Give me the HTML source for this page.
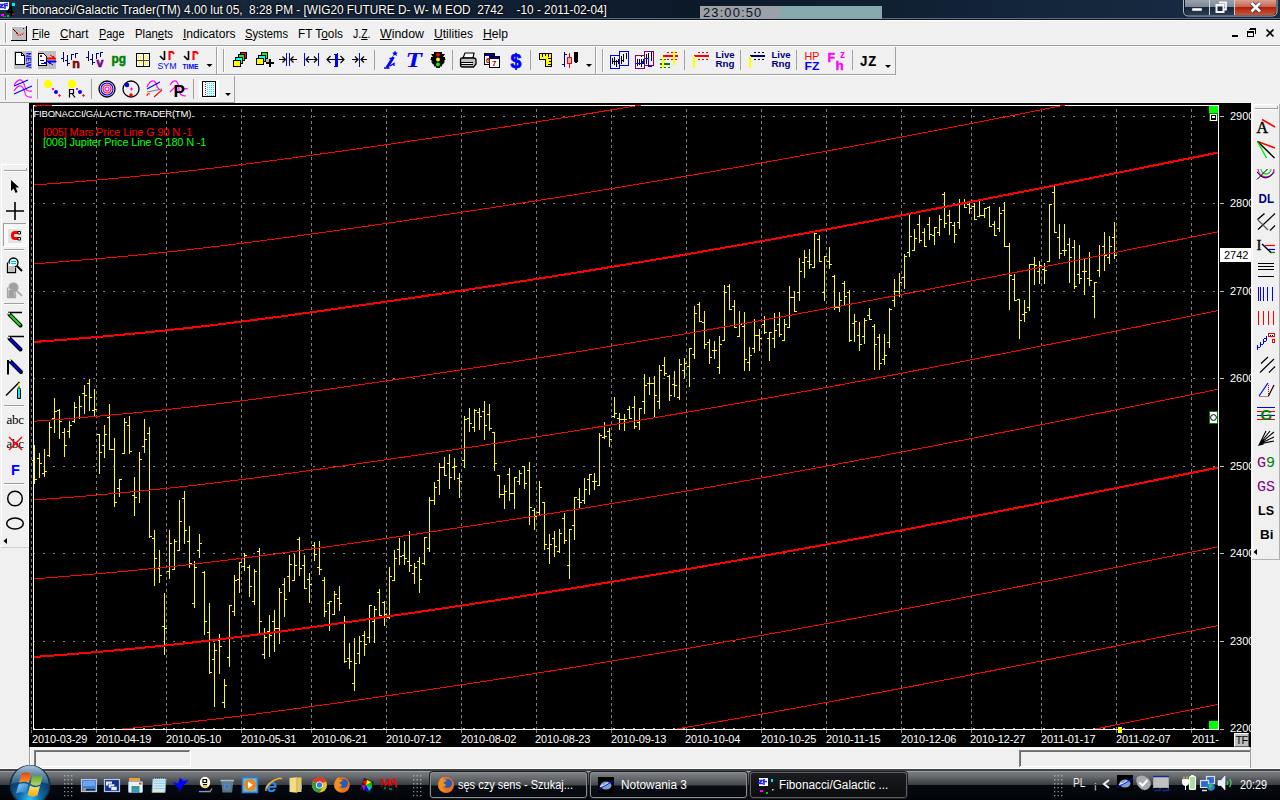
<!DOCTYPE html>
<html><head><meta charset="utf-8"><title>Fibonacci/Galactic Trader</title>
<style>
*{box-sizing:border-box;margin:0;padding:0}
html,body{width:1280px;height:800px;overflow:hidden;background:#f0f0f0;font-family:"Liberation Sans",sans-serif;font-size:12px;color:#000}
.a{position:absolute}
#title{left:0;top:0;width:1280px;height:20px;background:linear-gradient(90deg,#1c2c41 0,#142338 30%,#0c1929 55%,#13253a 80%,#1a2c44 100%)}
#title .l1{left:0;top:18px;width:1280px;height:1px;background:#5d6b7c}
#title .l2{left:0;top:19px;width:1280px;height:1px;background:#0e1826}
#ttext{left:22px;top:2.5px;color:#fff;font-size:12px;white-space:pre;text-shadow:0 0 3px #000,0 0 2px #000;transform-origin:0 0;transform:scaleX(.984)}
#clock{left:700px;top:6px;width:182px;height:13px;background:linear-gradient(90deg,#9ba0a9 0,#9ba0a9 80px,#86a9ae 80px,#86a9ae 100%)}
#clock span{left:3px;top:-1px;font-size:13px;letter-spacing:1.1px;color:#101018}
#menubar{left:0;top:20px;width:1280px;height:26px;background:#f0f0f0;border-top:1px solid #fff}
.mi{position:absolute;top:27px;font-size:12px;white-space:pre;transform-origin:0 0;display:inline-block}
.mi u{text-decoration:underline}
.sepw{left:0;width:1280px;height:1px;background:#fff}
.sepg{left:0;width:1280px;height:1px;background:#a0a0a0}
.grip{width:2px;background:#a0a0a0;border-right:1px solid #fff}
#chartwrap{left:29px;top:103px;width:1222px;height:644px;background:#000}
.ct{position:absolute;font-size:11px;color:#fff;white-space:pre;line-height:11px}
#status{left:0;top:747px;width:1280px;height:22px;background:#f0f0f0}
#taskbar{left:0;top:769px;width:1280px;height:31px;background:linear-gradient(180deg,#404245 0,#404245 2px,#9a9ea3 2px,#9a9ea3 3px,#777b7e 3px,#6a6d71 7px,#4b4e53 12px,#393c41 16px,#04080f 16px,#05080f 24px,#020308 31px)}
.tb{position:absolute;top:772px;height:26px;border:1px solid #8a8d91;border-radius:3px;background:linear-gradient(180deg,#7d8185 0,#63676b 6px,#45484d 12px,#0a0d13 13px,#06090f 100%);color:#fff;font-size:12px;white-space:pre;box-shadow:0 0 0 1px #1a1c20}
.tb.act{background:linear-gradient(180deg,#1a1c1f 0,#0b0c0e 100%);border-color:#5c5f63}
.tb span{position:absolute;top:5px;transform-origin:0 0;display:inline-block}
</style></head><body>
<div id="title" class="a"><div class="a l1"></div><div class="a l2"></div>
<div id="ttext" class="a">Fibonacci/Galactic Trader(TM) 4.00 lut 05,  8:28 PM - [WIG20 FUTURE D- W- M EOD  2742    -10 - 2011-02-04]</div>
<svg id="ticon" class="a" style="left:0;top:0" width="18" height="18" viewBox="0 0 18 18"><rect x="0" y="2" width="9" height="8" fill="#fff"/><path d="M0 4.5h3l-3 3h4M5 3v6M4 5.5h4M8 3.5h-2" stroke="#22f" stroke-width="1.6" fill="none"/><path d="M11.5 6l-4 6h6M11.5 6v10" stroke="#000" stroke-width="1.8" fill="none"/><rect x="12" y="3" width="3" height="3" fill="#0ee"/><rect x="1" y="14" width="3" height="2" fill="#f0f"/><rect x="7" y="15" width="2" height="2" fill="#0c0"/><rect x="12" y="14" width="2" height="1" fill="#f00"/><rect x="3" y="16" width="3" height="1" fill="#088"/></svg>
<svg class="a" style="left:1180px;top:0" width="100" height="18" viewBox="1180 0 100 18">
<defs><linearGradient id="cb1" x1="0" y1="0" x2="0" y2="1"><stop offset="0" stop-color="#98a3ae"/><stop offset=".46" stop-color="#7c8896"/><stop offset=".47" stop-color="#14233a"/><stop offset="1" stop-color="#2a3c54"/></linearGradient>
<linearGradient id="cb2" x1="0" y1="0" x2="0" y2="1"><stop offset="0" stop-color="#dba091"/><stop offset=".46" stop-color="#c8644f"/><stop offset=".47" stop-color="#a8200a"/><stop offset="1" stop-color="#cc5434"/></linearGradient></defs>
<path d="M1183.5 -1V11q0 5 5 5H1272q5 0 5-5V-1z" fill="#0c1828" stroke="#b4bcc6" stroke-width="1"/>
<path d="M1185 0h24v15h-20q-4 0-4-4z" fill="url(#cb1)"/><path d="M1210 0h24v15h-24z" fill="url(#cb1)"/><path d="M1235 0h41v11q0 4-4 4h-37z" fill="url(#cb2)"/>
<path d="M1209.5 0V15M1234.5 0V15" stroke="#c8d0d8" stroke-width="1"/>
<rect x="1192" y="8" width="10" height="3" fill="#fff" stroke="#445" stroke-width=".5"/>
<path d="M1219 2.5h7v7h-2" fill="none" stroke="#f4f4f4" stroke-width="1.8"/><rect x="1216.5" y="5" width="7" height="7" fill="none" stroke="#f4f4f4" stroke-width="2"/>
<path d="M1251.5 3l8.5 8.5M1260 3l-8.5 8.5" stroke="#334" stroke-width="4.2"/><path d="M1251.5 3l8.5 8.5M1260 3l-8.5 8.5" stroke="#fff" stroke-width="2.8"/>
</svg>
<div id="clock" class="a"><span class="a">23:00:50</span></div>
</div>
<div id="menubar" class="a"></div>
<div class="a sepg" style="top:45px"></div><div class="a sepw" style="top:46px"></div>
<div class="a sepg" style="top:74px;width:512px"></div><div class="a sepw" style="top:75px;width:512px"></div>
<span class="mi" style="left:32px;transform:scaleX(0.928)"><u>F</u>ile</span>
<span class="mi" style="left:60px;transform:scaleX(0.970)"><u>C</u>hart</span>
<span class="mi" style="left:99px;transform:scaleX(0.910)"><u>P</u>age</span>
<span class="mi" style="left:135px;transform:scaleX(0.949)">Plan<u>e</u>ts</span>
<span class="mi" style="left:182.5px;transform:scaleX(1.009)"><u>I</u>ndicators</span>
<span class="mi" style="left:245px;transform:scaleX(0.935)"><u>S</u>ystems</span>
<span class="mi" style="left:298px;transform:scaleX(0.987)">FT T<u>o</u>ols</span>
<span class="mi" style="left:352.5px;transform:scaleX(0.872)">J.<u>Z</u>.</span>
<span class="mi" style="left:380px;transform:scaleX(1.030)"><u>W</u>indow</span>
<span class="mi" style="left:434px;transform:scaleX(1.008)"><u>U</u>tilities</span>
<span class="mi" style="left:483px;transform:scaleX(1.013)"><u>H</u>elp</span>
<svg class="a" style="left:0;top:46px" width="900" height="57" viewBox="0 46 900 57" font-family="Liberation Sans" shape-rendering="crispEdges">
<!-- band borders -->
<path d="M0 74.5H895M895.5 47V75M216.5 47V74M595.5 47V74M0 102.5H234M234.5 76V103" stroke="#a0a0a0" fill="none"/>
<path d="M217.5 47V74M596.5 47V74M0 75.5H895" stroke="#fff" fill="none"/>
<!-- grippers -->
<path d="M5.5 49V72M223.5 49V72M602.5 49V72M5.5 78V100M5.5 23V43" stroke="#a0a0a0" fill="none"/>
<path d="M6.5 49V72M224.5 49V72M603.5 49V72M6.5 78V100M6.5 23V43" stroke="#fff" fill="none"/>
<!-- separators -->
<path d="M374.5 50V70M452.5 50V70M530.5 50V70M684.5 50V70M740.5 50V70M796.5 50V70M852.5 50V70M37.5 79V99M91.5 79V99M193.5 79V99" stroke="#a0a0a0" fill="none"/>
<!-- icon1 new -->
<rect x="14" y="51" width="18" height="18" fill="#c0c0c0"/>
<path d="M15.5 52.5H21.5L24.5 55.5V64.5H15.5Z" fill="#fff" stroke="#000"/>
<path d="M21.5 52.5V55.5H24.5" fill="none" stroke="#000"/>
<text transform="translate(26.2,52.5) rotate(90)" font-size="7.5" font-weight="bold" fill="#00f" textLength="15.5" lengthAdjust="spacingAndGlyphs" shape-rendering="auto">NEW</text>
<!-- icon2 -->
<rect x="38" y="51" width="18" height="18" fill="#c0c0c0"/>
<path d="M38.5 53.5H43.5L46.5 56.5V65.5H38.5Z" fill="#fff" stroke="#000"/>
<path d="M40 56h2v1h-2zM40 60h4v1h-4zM41 63h3v1h-3z" fill="#00f"/><path d="M40 55h2v1h-2zM44 62h2v2h-2z" fill="#f00"/><rect x="44" y="62" width="2" height="2" fill="#00f"/>
<path d="M47 58h6v-2l3 3h-9zM50 55l3 2" fill="#f00" stroke="#f00" stroke-width="1" shape-rendering="auto"/>
<path d="M56 62h-6v2l-3-3h9zM53 65l-3-2" fill="#00f" stroke="#00f" stroke-width="1" shape-rendering="auto"/>
<!-- icon3 bars n -->
<g stroke="#000080" fill="none"><path d="M63.5 52V62M61 58.5h2M67.5 55V66M65 60.5h2M68 63.5h2M71.5 54V60M72 54.5h2M75.5 53V58M76 53.5h2"/></g>
<text x="72.3" y="68" font-size="12.5" font-weight="bold" fill="#800000" stroke="#800000" stroke-width=".6" shape-rendering="auto">n</text>
<g stroke="#000080" fill="none"><path d="M88.5 51V61M86 57.5h2M92.5 54V65M90 59.5h2M93 62.5h2M96.5 53V59M97 53.5h2M100.5 52V57M101 52.5h2"/></g>
<text x="96.5" y="67" font-size="12.5" font-weight="bold" fill="#800080" stroke="#800080" stroke-width=".6" shape-rendering="auto">v</text>
<text x="111.5" y="62.5" font-size="13" font-weight="bold" fill="#008000" stroke="#008000" stroke-width=".5" shape-rendering="auto" textLength="14.5" lengthAdjust="spacingAndGlyphs">pg</text>
<!-- grid icon -->
<rect x="136.5" y="53.5" width="13" height="13" fill="#fff" stroke="#000" stroke-width="1.5"/>
<path d="M138 55h1v4h-1zM140 56h1v3h-1zM145 55h1v4h-1zM147 56h1v3h-1zM139 62h1v3h-1zM141 61h1v4h-1zM145 61h1v4h-1zM147 62h1v3h-1z" fill="#ff0"/>
<path d="M143 54V66M137 60.5H150" stroke="#404040" fill="none"/>
<!-- SYM -->
<path d="M164.5 51V60M160 56l4 4" stroke="#000" stroke-width="1.600" fill="none" shape-rendering="auto"/>
<path d="M169.5 60V52h3l1.5 2" stroke="#f00" stroke-width="2" fill="none" shape-rendering="auto"/>
<text x="157.5" y="68.5" font-size="8.5" fill="#00f" textLength="19" lengthAdjust="spacingAndGlyphs" shape-rendering="auto">SYM</text>
<path d="M188.5 51V60M184 56l4 4" stroke="#000" stroke-width="1.600" fill="none" shape-rendering="auto"/>
<path d="M193.5 60V52h3l1.5 2" stroke="#f00" stroke-width="2" fill="none" shape-rendering="auto"/>
<text x="182.5" y="68.5" font-size="7" font-weight="bold" fill="#00f" textLength="16" lengthAdjust="spacingAndGlyphs" shape-rendering="auto">TIME</text>
<path d="M206.5 64h6l-3 3z" fill="#000" shape-rendering="auto"/>
<!-- cascade -->
<g stroke="#000" stroke-width="1"><rect x="240.5" y="52.5" width="6" height="6" fill="#f00"/><rect x="238.5" y="54.5" width="6" height="6" fill="#0f0"/><rect x="235.5" y="57.5" width="7" height="6" fill="#0ff"/><rect x="233.5" y="60.5" width="7" height="6" fill="#ff0"/>
<rect x="261.5" y="52.5" width="6" height="6" fill="#0f0"/><rect x="258.5" y="55.5" width="7" height="6" fill="#0ff"/><rect x="256.5" y="58.5" width="7" height="6" fill="#ff0"/></g>
<path d="M269 59h2v3h3v2h-3v3h-2v-3h-3v-2h3z" fill="#000"/><rect x="266" y="59" width="3" height="3" fill="#c0c0c0"/>
<!-- arrows -->
<g shape-rendering="auto" fill="none" stroke="#000" stroke-width="1.200"><path d="M279 59.5h6M282.5 56.5l3 3l-3 3M297 59.5h-6M293.5 56.5l-3 3l3 3"/>
<path d="M306 59.5h11M309 56.5l-3 3l3 3M314 56.5l3 3l-3 3"/>
<path d="M327 59.5h17M330.5 56l-3.5 3.5l3.5 3.5M340.5 56l3.5 3.5l-3.5 3.5"/>
<path d="M352 59.5h6M355 56.5l3 3l-3 3M367 59.5h-6M364 56.5l-3 3l3 3"/></g>
<path d="M286.5 53V66M289.5 53V66M304.5 53V66M318.5 53V66M359.5 53V67" stroke="#00f" fill="none"/>
<path d="M334 54h3v-1h1v14h-4v-1h1v-11h-1z" fill="#00f"/>
<!-- i* and T -->
<g shape-rendering="auto" stroke="#00f" fill="none"><path d="M387 67.5l6.5-10.5" stroke-width="2.800"/><path d="M384 68h5.5M389.5 58.5h3.5" stroke-width="1.600"/><path d="M390 66l4-2.5v2.5" stroke-width="1.300"/></g>
<path d="M395 50.5l1 2l2 .3l-1.600 1.300l.5 2l-1.900-1.100l-1.900 1.100l.5-2l-1.600-1.300l2-.3z" fill="#00f" shape-rendering="auto"/>
<text x="405.5" y="67" font-size="20" font-weight="bold" font-style="italic" font-family="Liberation Serif" fill="#00f" shape-rendering="auto" textLength="16.5" lengthAdjust="spacingAndGlyphs">T</text>
<!-- traffic light -->
<path d="M434 52h8v2h3l-2 3h2v2h1l-2.5 2.5h1.5l-2 3h-1v2h-2v1.5h-4v-1.5h-2v-2h-1l-2-3h1.5l-2.5-2.5h1v-2h2l-2-3h3z" fill="#000" shape-rendering="auto"/>
<circle cx="438" cy="54.700" r="1.900" fill="#f00" shape-rendering="auto"/><circle cx="438" cy="59.5" r="1.900" fill="#ff0" shape-rendering="auto"/><circle cx="438" cy="64.300" r="1.900" fill="#0f0" shape-rendering="auto"/>
<!-- printer -->
<g shape-rendering="auto"><path d="M463 58l2-5h9l-1 5z" fill="#fff" stroke="#000" stroke-width="1.200"/><path d="M460.5 59.5q0-1.5 2-1.5h11q2.5 0 2.5 2v4l-2.5 3h-11q-2 0-2-2z" fill="#c0c0c0" stroke="#000" stroke-width="1.300"/><path d="M461 62.5h12M461 64.5h12" stroke="#000" stroke-width="1"/><path d="M462 63.5h10" stroke="#fff"/></g>
<!-- calendar -->
<rect x="484.5" y="53.5" width="10" height="11" fill="#fff" stroke="#000"/><rect x="485" y="54" width="9" height="2" fill="#000080"/>
<rect x="489.5" y="56.5" width="10" height="11" fill="#fff" stroke="#000"/><rect x="490" y="57" width="9" height="2" fill="#000080"/>
<text x="492" y="66" font-size="8" font-weight="bold" fill="#a00000" shape-rendering="auto">7</text><text x="486" y="63" font-size="7" font-weight="bold" fill="#a00000" shape-rendering="auto">6</text>
<text x="510.5" y="68" font-size="19.5" font-weight="bold" fill="#00f" stroke="#00f" stroke-width=".7" shape-rendering="auto">$</text>
<!-- ruler -->
<path d="M539.5 53.5H551.5V66.5H545.5V59.5H539.5Z" fill="#ff0" stroke="#000" stroke-width="1.5"/>
<path d="M542.5 54v3M545.5 54v2M548.5 54v3M551 58.5h-3M551 61.5h-2M551 64.5h-3" stroke="#000" fill="none"/>
<!-- bars/candles -->
<path d="M564.5 52V67M565 54.5h2M562 64.5h2" stroke="#000080" fill="none"/>
<path d="M569.5 53V68" stroke="#f00" stroke-width="1"/><rect x="567.5" y="57.5" width="4" height="6" fill="#c0c0c0" stroke="#f00"/>
<path d="M574 52h4v10h-1v1h-2v-1h-1z" fill="#000"/>
<path d="M586 64h6l-3 3z" fill="#000" shape-rendering="auto"/>
<!-- blue rect charts -->
<g fill="none"><rect x="610.5" y="55.5" width="9" height="13" stroke="#00f" stroke-width="1.400"/><rect x="619.5" y="51.5" width="9" height="14" stroke="#00f" stroke-width="1.400"/>
<path d="M612.5 58v6M614.5 57v8M616.5 60v7M618.5 59v5M621.5 56v8M623.5 54v8M626.5 53v6M612 61.5h6M621 60.5h3" stroke="#000"/>
<rect x="635.5" y="55.5" width="9" height="13" stroke="#800080" stroke-width="1.400"/><rect x="644.5" y="51.5" width="9" height="14" stroke="#800080" stroke-width="1.400"/>
<path d="M637.5 58v8M639.5 57v8M641.5 56v11M643.5 59v5M646.5 54v10M648.5 53v10M651.5 52v9" stroke="#000"/>
<path d="M636 63.5h6l2-4M645 58.5h3v8h4" stroke="#00f"/><rect x="636" y="57" width="8" height="2" fill="#fff" stroke="none"/></g>
<!-- red/green/yellow lines -->
<path d="M667 52h2v1h-2zM671 52h2v1h-2zM675 52h2v1h-2zM667 59h2v1h-2zM671 59h2v1h-2zM675 59h2v1h-2z" fill="#f00"/>
<rect x="663" y="55" width="15" height="2" fill="#f00"/>
<rect x="673" y="51" width="2" height="14" fill="#ff0"/>
<path d="M660 59h2v1h-2zM664 59h2v1h-2zM660 67h2v1h-2zM664 67h2v1h-2zM668 67h2v1h-2z" fill="#008000"/>
<rect x="660" y="63" width="10" height="2" fill="#008000"/><rect x="662" y="57" width="2" height="11" fill="#ff0"/>
<!-- live rng red -->
<path d="M698 52h2v1h-2zM702 52h2v1h-2zM706 52h2v1h-2zM698 59h2v1h-2zM702 59h2v1h-2zM706 59h2v1h-2z" fill="#f00"/>
<rect x="694" y="55" width="15" height="2" fill="#f00"/><path d="M693 56h2v5h2v1h-2v6h-2z" fill="#ff0"/>
<g font-size="8.5" font-weight="bold" fill="#000080" shape-rendering="auto"><text x="715.5" y="58" textLength="19" lengthAdjust="spacingAndGlyphs">Live</text><text x="715.5" y="67" textLength="19" lengthAdjust="spacingAndGlyphs">Rng</text>
<text x="771.5" y="58" textLength="19" lengthAdjust="spacingAndGlyphs">Live</text><text x="771.5" y="67" textLength="19" lengthAdjust="spacingAndGlyphs">Rng</text></g>
<path d="M754 52h2v1h-2zM758 52h2v1h-2zM762 52h2v1h-2zM754 59h2v1h-2zM758 59h2v1h-2zM762 59h2v1h-2z" fill="#000080"/>
<rect x="750" y="55" width="15" height="2" fill="#000080"/><path d="M749 56h2v5h2v1h-2v6h-2z" fill="#ff0"/>
<g shape-rendering="auto"><text x="804.5" y="59.5" font-size="11" fill="#f00" textLength="15" lengthAdjust="spacingAndGlyphs">HP</text><text x="804.5" y="69.5" font-size="11.5" fill="#00f" font-weight="bold" textLength="15" lengthAdjust="spacingAndGlyphs">FZ</text>
<text x="827.5" y="61.5" font-size="12.5" font-weight="bold" fill="#f0f" stroke="#f0f" stroke-width=".4">F</text><text x="835.5" y="69.5" font-size="13.5" font-weight="bold" fill="#f0f" stroke="#f0f" stroke-width=".4">h</text><text x="840" y="57.5" font-size="10" font-weight="bold" fill="#f0f">z</text>
<text x="859.5" y="66" font-size="14" font-weight="bold" font-family="Liberation Mono" fill="#000" textLength="17" lengthAdjust="spacingAndGlyphs">JZ</text>
<path d="M885 65h6l-3 3z" fill="#000"/></g>
<!-- toolbar 2 -->
<g shape-rendering="auto" fill="none" stroke-width="1.100">
<path d="M14 85q4-6 7-5q3 2 4 7t7 4M14 91q4-6 7-5q3 2 4 7t7 4" stroke="#f0f"/><path d="M14 86l14-6M14 94l18-8" stroke="#00f"/>
<circle cx="48" cy="84" r="4.200" fill="#ff0" stroke="none"/><rect x="52" y="88" width="2" height="2" fill="#f0f" stroke="none"/><circle cx="56" cy="92" r="2" fill="#00f" stroke="none"/><path d="M59.5 94l1.5 1.5l-1.5 1.5l-1.5-1.5z" fill="#f00" stroke="none"/>
<circle cx="72" cy="84" r="4.200" fill="#ff0" stroke="none"/><rect x="76" y="88" width="2" height="2" fill="#f0f" stroke="none"/><circle cx="80" cy="92" r="2" fill="#00f" stroke="none"/><path d="M83.5 94l1.5 1.5l-1.5 1.5l-1.5-1.5z" fill="#f00" stroke="none"/>
<path d="M69.5 97.5v-8h4v4h-4M72 93.5l3 4" stroke="#000" stroke-width="1.200"/>
<circle cx="107" cy="89" r="8" stroke="#000" stroke-width="1.300"/><circle cx="107" cy="89" r="6" stroke="#00f"/><circle cx="107" cy="89" r="4" stroke="#f00"/><circle cx="107" cy="89" r="2" stroke="#f0f"/>
<circle cx="131" cy="89" r="8" stroke="#000" stroke-width="1.300"/><circle cx="127" cy="85" r="2.300" fill="#00f" stroke="none"/><circle cx="131" cy="95" r="1.800" fill="#f00" stroke="none"/><path d="M130 89h3M131.5 87.5v3" stroke="#f0f"/>
<path d="M147 87q3-7 7-6q3 2 3 6l3 3" stroke="#f0f"/><path d="M147 89l13-7" stroke="#00f"/><path d="M147 92l15-3" stroke="#808080"/><path d="M147 96q0-3 3-2M154 97l8-7" stroke="#f00"/>
<path d="M170 85q3-5 6-4q3 3 3 9t7 6M170 92l7-7M182 90q3-2 6-1" stroke="#f0f"/>
</g>
<text x="173.5" y="96.5" font-size="17" font-weight="bold" fill="#000" shape-rendering="auto">P</text>
<rect x="199" y="80" width="20" height="18" fill="#fff"/><rect x="202.5" y="81.5" width="13" height="15" fill="#fff" stroke="#000" stroke-width="1.200"/>
<path d="M205.5 82V96" stroke="#f00" stroke-dasharray="1 1"/><path d="M207.5 83V96M209.5 83V96M211.5 83V96M213.5 83V96" stroke="#0ff" stroke-dasharray="1 1"/>
<path d="M225 93h6l-3 3z" fill="#000" shape-rendering="auto"/>
</svg>
<!-- menubar icon + MDI buttons -->
<svg class="a" style="left:0;top:21px" width="1280" height="24" viewBox="0 21 1280 24" shape-rendering="crispEdges">
<path d="M5.5 23V43" stroke="#a0a0a0"/><path d="M6.5 23V43" stroke="#fff"/>
<rect x="11" y="26" width="16" height="15" fill="#000"/><rect x="11" y="26" width="15" height="14" fill="#fff"/><rect x="12" y="27" width="14" height="13" fill="#c0c0c0"/>
<path d="M13 29l5 5" stroke="#000" shape-rendering="auto"/><path d="M15 31l3 4h3l3-2" stroke="#f00" stroke-dasharray="1.200 1" stroke-width="1.300" fill="none" shape-rendering="auto"/><rect x="23" y="28" width="1" height="1" fill="#00f"/>
<rect x="1232" y="35" width="6" height="2" fill="#000"/>
<path d="M1249.5 28.5h6v5M1247.5 31.5h6v5h-6z" fill="none" stroke="#000"/><path d="M1249 29.5h7M1247 32.5h7" stroke="#000"/>
<path d="M1266.5 29.5l7 7M1273.5 29.5l-7 7" stroke="#000" stroke-width="1.700" shape-rendering="auto"/>
</svg>
<div id="chartwrap" class="a"><svg id="chart" width="1222" height="644" viewBox="29 103 1222 644" shape-rendering="crispEdges">
<rect x="29" y="103" width="1222" height="644" fill="#000"/>
<defs><clipPath id="cf"><rect x="34" y="105" width="1184" height="624"/></clipPath></defs>
<path d="M31.5 109V729M31.5 730V733M96.5 109V729M96.5 730V733M166.5 109V729M166.5 730V733M241.5 109V729M241.5 730V733M311.5 109V729M311.5 730V733M386.5 109V729M386.5 730V733M461.5 109V729M461.5 730V733M536.5 109V729M536.5 730V733M611.5 109V729M611.5 730V733M686.5 109V729M686.5 730V733M761.5 109V729M761.5 730V733M826.5 109V729M826.5 730V733M901.5 109V729M901.5 730V733M971.5 109V729M971.5 730V733M1041.5 109V729M1041.5 730V733M1116.5 109V729M1116.5 730V733M1191.5 109V729M1191.5 730V733" stroke="#808080" stroke-width="1" stroke-dasharray="3 3" stroke-dashoffset="0" fill="none"/>
<path d="M33 116.5H1218M33 203.5H1218M33 291.5H1218M33 378.5H1218M33 466.5H1218M33 553.5H1218M33 641.5H1218" stroke="#808080" stroke-width="1" stroke-dasharray="2 8" fill="none"/>
<path d="M33 728.5H1218" stroke="#c0c0c0" stroke-width="1" stroke-dasharray="2 8" fill="none"/>
<path d="M34 445h1V484h-1zM32 460h2v1h-2zM35 479h2v1h-2zM39 453h1V478h-1zM37 458h2v1h-2zM40 463h2v1h-2zM44 449h1V477h-1zM42 473h2v1h-2zM45 471h2v1h-2zM49 422h1V457h-1zM47 455h2v1h-2zM50 427h2v1h-2zM54 398h1V433h-1zM52 418h2v1h-2zM55 411h2v1h-2zM59 409h1V439h-1zM57 410h2v1h-2zM60 421h2v1h-2zM64 428h1V457h-1zM62 432h2v1h-2zM65 445h2v1h-2zM69 421h1V438h-1zM67 431h2v1h-2zM70 425h2v1h-2zM74 402h1V423h-1zM72 421h2v1h-2zM75 407h2v1h-2zM79 396h1V419h-1zM77 417h2v1h-2zM80 406h2v1h-2zM84 385h1V414h-1zM82 393h2v1h-2zM85 395h2v1h-2zM89 379h1V411h-1zM87 383h2v1h-2zM90 397h2v1h-2zM94 389h1V416h-1zM92 410h2v1h-2zM95 409h2v1h-2zM99 434h1V474h-1zM97 434h2v1h-2zM100 452h2v1h-2zM104 425h1V458h-1zM102 445h2v1h-2zM105 434h2v1h-2zM109 404h1V450h-1zM107 417h2v1h-2zM110 449h2v1h-2zM114 438h1V507h-1zM112 449h2v1h-2zM115 502h2v1h-2zM119 479h1V497h-1zM117 488h2v1h-2zM120 479h2v1h-2zM124 418h1V454h-1zM122 453h2v1h-2zM125 422h2v1h-2zM129 416h1V454h-1zM127 425h2v1h-2zM130 451h2v1h-2zM134 477h1V516h-1zM132 495h2v1h-2zM135 497h2v1h-2zM139 452h1V503h-1zM137 491h2v1h-2zM140 459h2v1h-2zM144 419h1V453h-1zM142 446h2v1h-2zM145 439h2v1h-2zM149 427h1V538h-1zM147 433h2v1h-2zM150 536h2v1h-2zM154 530h1V586h-1zM152 538h2v1h-2zM155 558h2v1h-2zM159 550h1V583h-1zM157 568h2v1h-2zM160 575h2v1h-2zM164 593h1V655h-1zM162 626h2v1h-2zM165 628h2v1h-2zM169 530h1V579h-1zM167 571h2v1h-2zM170 543h2v1h-2zM174 539h1V570h-1zM172 569h2v1h-2zM175 541h2v1h-2zM179 500h1V551h-1zM177 550h2v1h-2zM180 521h2v1h-2zM184 491h1V544h-1zM182 498h2v1h-2zM185 530h2v1h-2zM189 526h1V568h-1zM187 541h2v1h-2zM190 563h2v1h-2zM194 561h1V608h-1zM192 603h2v1h-2zM195 567h2v1h-2zM199 534h1V558h-1zM197 550h2v1h-2zM200 543h2v1h-2zM204 571h1V635h-1zM202 572h2v1h-2zM205 621h2v1h-2zM209 603h1V674h-1zM207 632h2v1h-2zM210 672h2v1h-2zM214 643h1V707h-1zM212 659h2v1h-2zM215 650h2v1h-2zM219 634h1V674h-1zM217 640h2v1h-2zM220 646h2v1h-2zM224 679h1V708h-1zM222 702h2v1h-2zM225 685h2v1h-2zM229 605h1V667h-1zM227 657h2v1h-2zM230 605h2v1h-2zM234 575h1V616h-1zM232 611h2v1h-2zM235 580h2v1h-2zM239 562h1V593h-1zM237 579h2v1h-2zM240 562h2v1h-2zM244 553h1V571h-1zM242 566h2v1h-2zM245 555h2v1h-2zM249 565h1V597h-1zM247 567h2v1h-2zM250 586h2v1h-2zM254 569h1V605h-1zM252 601h2v1h-2zM255 571h2v1h-2zM259 548h1V633h-1zM257 551h2v1h-2zM260 621h2v1h-2zM264 628h1V659h-1zM262 654h2v1h-2zM265 637h2v1h-2zM269 615h1V657h-1zM267 631h2v1h-2zM270 635h2v1h-2zM274 610h1V652h-1zM272 621h2v1h-2zM275 628h2v1h-2zM279 588h1V644h-1zM277 628h2v1h-2zM280 592h2v1h-2zM284 578h1V617h-1zM282 584h2v1h-2zM285 599h2v1h-2zM289 555h1V592h-1zM287 576h2v1h-2zM290 564h2v1h-2zM294 554h1V581h-1zM292 580h2v1h-2zM295 565h2v1h-2zM299 537h1V576h-1zM297 539h2v1h-2zM300 568h2v1h-2zM304 555h1V589h-1zM302 565h2v1h-2zM305 588h2v1h-2zM309 573h1V603h-1zM307 579h2v1h-2zM310 584h2v1h-2zM314 542h1V561h-1zM312 545h2v1h-2zM315 554h2v1h-2zM319 541h1V575h-1zM317 567h2v1h-2zM320 569h2v1h-2zM324 577h1V617h-1zM322 580h2v1h-2zM325 611h2v1h-2zM329 601h1V631h-1zM327 603h2v1h-2zM330 601h2v1h-2zM334 591h1V615h-1zM332 614h2v1h-2zM335 594h2v1h-2zM339 586h1V611h-1zM337 598h2v1h-2zM340 603h2v1h-2zM344 616h1V663h-1zM342 622h2v1h-2zM345 661h2v1h-2zM349 643h1V669h-1zM347 658h2v1h-2zM350 661h2v1h-2zM354 638h1V691h-1zM352 683h2v1h-2zM355 663h2v1h-2zM359 636h1V664h-1zM357 653h2v1h-2zM360 641h2v1h-2zM364 631h1V656h-1zM362 635h2v1h-2zM365 644h2v1h-2zM369 605h1V643h-1zM367 637h2v1h-2zM370 605h2v1h-2zM374 606h1V643h-1zM372 621h2v1h-2zM375 609h2v1h-2zM379 589h1V616h-1zM377 592h2v1h-2zM380 615h2v1h-2zM384 601h1V626h-1zM382 602h2v1h-2zM385 614h2v1h-2zM389 567h1V619h-1zM387 617h2v1h-2zM390 576h2v1h-2zM394 550h1V581h-1zM392 580h2v1h-2zM395 558h2v1h-2zM399 538h1V565h-1zM397 549h2v1h-2zM400 556h2v1h-2zM404 541h1V565h-1zM402 555h2v1h-2zM405 558h2v1h-2zM409 531h1V572h-1zM407 561h2v1h-2zM410 565h2v1h-2zM414 563h1V584h-1zM412 573h2v1h-2zM415 567h2v1h-2zM419 557h1V593h-1zM417 561h2v1h-2zM420 579h2v1h-2zM424 537h1V565h-1zM422 563h2v1h-2zM425 537h2v1h-2zM429 497h1V552h-1zM427 548h2v1h-2zM430 500h2v1h-2zM434 482h1V505h-1zM432 500h2v1h-2zM435 487h2v1h-2zM439 463h1V495h-1zM437 480h2v1h-2zM440 467h2v1h-2zM444 457h1V476h-1zM442 467h2v1h-2zM445 475h2v1h-2zM449 454h1V489h-1zM447 463h2v1h-2zM450 477h2v1h-2zM454 458h1V480h-1zM452 467h2v1h-2zM455 466h2v1h-2zM459 473h1V498h-1zM457 478h2v1h-2zM460 481h2v1h-2zM464 416h1V468h-1zM462 460h2v1h-2zM465 419h2v1h-2zM469 408h1V432h-1zM467 418h2v1h-2zM470 423h2v1h-2zM474 409h1V432h-1zM472 427h2v1h-2zM475 410h2v1h-2zM479 408h1V430h-1zM477 412h2v1h-2zM480 416h2v1h-2zM484 401h1V440h-1zM482 411h2v1h-2zM485 425h2v1h-2zM489 404h1V431h-1zM487 414h2v1h-2zM490 428h2v1h-2zM494 432h1V471h-1zM492 432h2v1h-2zM495 463h2v1h-2zM499 475h1V498h-1zM497 475h2v1h-2zM500 494h2v1h-2zM504 485h1V509h-1zM502 494h2v1h-2zM505 491h2v1h-2zM509 468h1V501h-1zM507 474h2v1h-2zM510 493h2v1h-2zM514 477h1V509h-1zM512 493h2v1h-2zM515 477h2v1h-2zM519 470h1V485h-1zM517 481h2v1h-2zM520 473h2v1h-2zM524 466h1V489h-1zM522 466h2v1h-2zM525 483h2v1h-2zM529 462h1V525h-1zM527 470h2v1h-2zM530 507h2v1h-2zM534 508h1V530h-1zM532 510h2v1h-2zM535 516h2v1h-2zM539 481h1V516h-1zM537 512h2v1h-2zM540 487h2v1h-2zM544 502h1V550h-1zM542 502h2v1h-2zM545 544h2v1h-2zM549 534h1V564h-1zM547 548h2v1h-2zM550 544h2v1h-2zM554 531h1V557h-1zM552 538h2v1h-2zM555 546h2v1h-2zM559 529h1V553h-1zM557 551h2v1h-2zM560 533h2v1h-2zM564 513h1V544h-1zM562 518h2v1h-2zM565 540h2v1h-2zM569 529h1V579h-1zM567 565h2v1h-2zM570 529h2v1h-2zM574 497h1V540h-1zM572 525h2v1h-2zM575 497h2v1h-2zM579 488h1V509h-1zM577 499h2v1h-2zM580 502h2v1h-2zM584 478h1V504h-1zM582 500h2v1h-2zM585 489h2v1h-2zM589 474h1V495h-1zM587 479h2v1h-2zM590 474h2v1h-2zM594 473h1V490h-1zM592 481h2v1h-2zM595 481h2v1h-2zM599 433h1V486h-1zM597 485h2v1h-2zM600 435h2v1h-2zM604 422h1V439h-1zM602 437h2v1h-2zM605 436h2v1h-2zM609 428h1V447h-1zM607 431h2v1h-2zM610 439h2v1h-2zM614 397h1V418h-1zM612 416h2v1h-2zM615 413h2v1h-2zM619 413h1V430h-1zM617 418h2v1h-2zM620 419h2v1h-2zM624 414h1V431h-1zM622 419h2v1h-2zM625 419h2v1h-2zM629 406h1V419h-1zM627 409h2v1h-2zM630 418h2v1h-2zM634 396h1V429h-1zM632 407h2v1h-2zM635 426h2v1h-2zM639 408h1V430h-1zM637 422h2v1h-2zM640 408h2v1h-2zM644 374h1V414h-1zM642 401h2v1h-2zM645 385h2v1h-2zM649 377h1V395h-1zM647 383h2v1h-2zM650 383h2v1h-2zM654 376h1V418h-1zM652 383h2v1h-2zM655 395h2v1h-2zM659 365h1V409h-1zM657 401h2v1h-2zM660 370h2v1h-2zM664 357h1V376h-1zM662 365h2v1h-2zM665 373h2v1h-2zM669 375h1V401h-1zM667 376h2v1h-2zM670 395h2v1h-2zM674 371h1V397h-1zM672 384h2v1h-2zM675 385h2v1h-2zM679 359h1V400h-1zM677 397h2v1h-2zM680 364h2v1h-2zM684 358h1V378h-1zM682 370h2v1h-2zM685 363h2v1h-2zM689 348h1V387h-1zM687 366h2v1h-2zM690 348h2v1h-2zM694 306h1V359h-1zM692 354h2v1h-2zM695 313h2v1h-2zM699 302h1V322h-1zM697 304h2v1h-2zM700 321h2v1h-2zM704 311h1V349h-1zM702 322h2v1h-2zM705 344h2v1h-2zM709 339h1V364h-1zM707 342h2v1h-2zM710 357h2v1h-2zM714 341h1V359h-1zM712 350h2v1h-2zM715 350h2v1h-2zM719 336h1V374h-1zM717 367h2v1h-2zM720 344h2v1h-2zM724 285h1V341h-1zM722 340h2v1h-2zM725 292h2v1h-2zM729 284h1V310h-1zM727 286h2v1h-2zM730 309h2v1h-2zM734 300h1V328h-1zM732 306h2v1h-2zM735 327h2v1h-2zM739 311h1V337h-1zM737 336h2v1h-2zM740 324h2v1h-2zM744 312h1V371h-1zM742 326h2v1h-2zM745 359h2v1h-2zM749 347h1V371h-1zM747 362h2v1h-2zM750 355h2v1h-2zM754 319h1V353h-1zM752 348h2v1h-2zM755 335h2v1h-2zM759 329h1V351h-1zM757 335h2v1h-2zM760 338h2v1h-2zM764 316h1V334h-1zM762 324h2v1h-2zM765 332h2v1h-2zM769 332h1V361h-1zM767 338h2v1h-2zM770 332h2v1h-2zM774 313h1V348h-1zM772 338h2v1h-2zM775 330h2v1h-2zM779 312h1V337h-1zM777 324h2v1h-2zM780 334h2v1h-2zM784 319h1V341h-1zM782 340h2v1h-2zM785 324h2v1h-2zM789 286h1V328h-1zM787 327h2v1h-2zM790 297h2v1h-2zM794 291h1V312h-1zM792 297h2v1h-2zM795 311h2v1h-2zM799 258h1V301h-1zM797 292h2v1h-2zM800 271h2v1h-2zM804 250h1V278h-1zM802 262h2v1h-2zM805 257h2v1h-2zM809 249h1V269h-1zM807 261h2v1h-2zM810 264h2v1h-2zM814 232h1V268h-1zM812 267h2v1h-2zM815 233h2v1h-2zM819 235h1V262h-1zM817 239h2v1h-2zM820 261h2v1h-2zM824 256h1V301h-1zM822 292h2v1h-2zM825 256h2v1h-2zM829 247h1V269h-1zM827 261h2v1h-2zM830 264h2v1h-2zM834 275h1V310h-1zM832 276h2v1h-2zM835 307h2v1h-2zM839 292h1V312h-1zM837 307h2v1h-2zM840 300h2v1h-2zM844 281h1V306h-1zM842 283h2v1h-2zM845 296h2v1h-2zM849 290h1V342h-1zM847 292h2v1h-2zM850 340h2v1h-2zM854 314h1V342h-1zM852 323h2v1h-2zM855 321h2v1h-2zM859 322h1V351h-1zM857 335h2v1h-2zM860 344h2v1h-2zM864 318h1V344h-1zM862 336h2v1h-2zM865 320h2v1h-2zM869 308h1V320h-1zM867 315h2v1h-2zM870 319h2v1h-2zM874 324h1V370h-1zM872 326h2v1h-2zM875 344h2v1h-2zM879 334h1V370h-1zM877 337h2v1h-2zM880 363h2v1h-2zM884 334h1V365h-1zM882 359h2v1h-2zM885 355h2v1h-2zM889 308h1V348h-1zM887 342h2v1h-2zM890 309h2v1h-2zM894 279h1V307h-1zM892 300h2v1h-2zM895 291h2v1h-2zM899 273h1V297h-1zM897 291h2v1h-2zM900 282h2v1h-2zM904 254h1V289h-1zM902 277h2v1h-2zM905 256h2v1h-2zM909 215h1V257h-1zM907 252h2v1h-2zM910 236h2v1h-2zM914 229h1V251h-1zM912 250h2v1h-2zM915 238h2v1h-2zM919 215h1V243h-1zM917 224h2v1h-2zM920 240h2v1h-2zM924 228h1V247h-1zM922 232h2v1h-2zM925 246h2v1h-2zM929 217h1V240h-1zM927 224h2v1h-2zM930 234h2v1h-2zM934 227h1V245h-1zM932 235h2v1h-2zM935 227h2v1h-2zM939 215h1V236h-1zM937 232h2v1h-2zM940 219h2v1h-2zM944 192h1V228h-1zM942 194h2v1h-2zM945 223h2v1h-2zM949 210h1V235h-1zM947 215h2v1h-2zM950 222h2v1h-2zM954 222h1V243h-1zM952 225h2v1h-2zM955 234h2v1h-2zM959 199h1V229h-1zM957 222h2v1h-2zM960 204h2v1h-2zM964 199h1V208h-1zM962 203h2v1h-2zM965 207h2v1h-2zM969 203h1V214h-1zM967 204h2v1h-2zM970 208h2v1h-2zM974 203h1V220h-1zM972 206h2v1h-2zM975 219h2v1h-2zM979 200h1V217h-1zM977 216h2v1h-2zM980 215h2v1h-2zM984 208h1V218h-1zM982 215h2v1h-2zM985 208h2v1h-2zM989 206h1V227h-1zM987 207h2v1h-2zM990 226h2v1h-2zM994 221h1V236h-1zM992 224h2v1h-2zM995 235h2v1h-2zM999 207h1V232h-1zM997 228h2v1h-2zM1000 213h2v1h-2zM1004 202h1V247h-1zM1002 210h2v1h-2zM1005 246h2v1h-2zM1009 243h1V310h-1zM1007 246h2v1h-2zM1010 275h2v1h-2zM1014 274h1V301h-1zM1012 279h2v1h-2zM1015 300h2v1h-2zM1019 299h1V339h-1zM1017 299h2v1h-2zM1020 320h2v1h-2zM1024 300h1V322h-1zM1022 314h2v1h-2zM1025 312h2v1h-2zM1029 264h1V311h-1zM1027 307h2v1h-2zM1030 264h2v1h-2zM1034 257h1V285h-1zM1032 264h2v1h-2zM1035 265h2v1h-2zM1039 261h1V284h-1zM1037 271h2v1h-2zM1040 265h2v1h-2zM1044 263h1V284h-1zM1042 269h2v1h-2zM1045 270h2v1h-2zM1049 204h1V262h-1zM1047 261h2v1h-2zM1050 204h2v1h-2zM1054 186h1V233h-1zM1052 192h2v1h-2zM1055 232h2v1h-2zM1059 224h1V259h-1zM1057 237h2v1h-2zM1060 253h2v1h-2zM1064 224h1V256h-1zM1062 250h2v1h-2zM1065 250h2v1h-2zM1069 238h1V283h-1zM1067 244h2v1h-2zM1070 257h2v1h-2zM1074 240h1V289h-1zM1072 247h2v1h-2zM1075 286h2v1h-2zM1079 245h1V284h-1zM1077 274h2v1h-2zM1080 278h2v1h-2zM1084 259h1V295h-1zM1082 271h2v1h-2zM1085 271h2v1h-2zM1089 252h1V286h-1zM1087 278h2v1h-2zM1090 280h2v1h-2zM1094 282h1V318h-1zM1092 296h2v1h-2zM1095 282h2v1h-2zM1099 245h1V277h-1zM1097 270h2v1h-2zM1100 255h2v1h-2zM1104 232h1V271h-1zM1102 246h2v1h-2zM1105 255h2v1h-2zM1109 236h1V264h-1zM1107 257h2v1h-2zM1110 246h2v1h-2zM1114 222h1V259h-1zM1112 237h2v1h-2zM1115 255h2v1h-2z" fill="#ff0"/>
<path d="M33.5 105.5H1218.5V729.5H33.5Z" fill="none" stroke="#fff" stroke-width="1"/>
<g clip-path="url(#cf)" fill="none" stroke="#f00">
<polyline points="34,106.2 46,105.4 58,104.5 70,103.5 82,102.5 94,101.5 106,100.5 118,99.4 130,98.3 142,97.1 154,95.9 166,94.6 178,93.4 190,92.0 202,90.6 214,89.2 226,87.7 238,86.3 250,84.7 262,83.2 274,81.6 286,80.0 298,78.4 310,76.7 322,75.1 334,73.4 346,71.7 358,70.0 370,68.3 382,66.5 394,64.8 406,63.0 418,61.3 430,59.5 442,57.7 454,55.9 466,54.1 478,52.3 490,50.5 502,48.6 514,46.8 526,44.9 538,43.0 550,41.1 562,39.2 574,37.3 586,35.3 598,33.4 610,31.4 622,29.4 634,27.4 646,25.4 658,23.4 670,21.4 682,19.3 694,17.3 706,15.2 718,13.1 730,11.0 742,8.9 754,6.7 766,4.6 778,2.5 790,0.3 802,-1.9 814,-4.1 826,-6.3 838,-8.5 850,-10.7 862,-13.0 874,-15.2 886,-17.5 898,-19.8 910,-22.1 922,-24.4 934,-26.7 946,-29.1 958,-31.4 970,-33.7 982,-36.1 994,-38.4 1006,-40.8 1018,-43.1 1030,-45.5 1042,-47.9 1054,-50.2 1066,-52.6 1078,-55.0 1090,-57.4 1102,-59.8 1114,-62.2 1126,-64.7 1138,-67.1 1150,-69.5 1162,-71.9 1174,-74.3 1186,-76.7 1198,-79.1 1210,-81.6 1222,-84.0" stroke-width="1"/>
<polyline points="34,185.0 46,184.1 58,183.2 70,182.3 82,181.3 94,180.3 106,179.2 118,178.1 130,177.0 142,175.8 154,174.6 166,173.4 178,172.1 190,170.8 202,169.4 214,168.0 226,166.5 238,165.0 250,163.5 262,161.9 274,160.4 286,158.8 298,157.1 310,155.5 322,153.8 334,152.1 346,150.4 358,148.7 370,147.0 382,145.3 394,143.5 406,141.8 418,140.0 430,138.3 442,136.5 454,134.7 466,132.9 478,131.1 490,129.2 502,127.4 514,125.5 526,123.6 538,121.7 550,119.8 562,117.9 574,116.0 586,114.1 598,112.1 610,110.1 622,108.2 634,106.2 646,104.2 658,102.2 670,100.1 682,98.1 694,96.0 706,93.9 718,91.8 730,89.7 742,87.6 754,85.5 766,83.4 778,81.2 790,79.0 802,76.9 814,74.7 826,72.5 838,70.3 850,68.0 862,65.8 874,63.5 886,61.2 898,59.0 910,56.7 922,54.3 934,52.0 946,49.7 958,47.4 970,45.0 982,42.7 994,40.3 1006,38.0 1018,35.6 1030,33.3 1042,30.9 1054,28.5 1066,26.1 1078,23.7 1090,21.3 1102,18.9 1114,16.5 1126,14.1 1138,11.7 1150,9.2 1162,6.8 1174,4.4 1186,2.0 1198,-0.4 1210,-2.8 1222,-5.2" stroke-width="1"/>
<polyline points="34,263.8 46,262.9 58,262.0 70,261.0 82,260.0 94,259.0 106,258.0 118,256.9 130,255.8 142,254.6 154,253.4 166,252.1 178,250.9 190,249.5 202,248.1 214,246.7 226,245.2 238,243.8 250,242.2 262,240.7 274,239.1 286,237.5 298,235.9 310,234.2 322,232.6 334,230.9 346,229.2 358,227.5 370,225.8 382,224.0 394,222.3 406,220.5 418,218.8 430,217.0 442,215.2 454,213.4 466,211.6 478,209.8 490,208.0 502,206.1 514,204.3 526,202.4 538,200.5 550,198.6 562,196.7 574,194.8 586,192.8 598,190.9 610,188.9 622,186.9 634,184.9 646,182.9 658,180.9 670,178.9 682,176.8 694,174.8 706,172.7 718,170.6 730,168.5 742,166.4 754,164.2 766,162.1 778,160.0 790,157.8 802,155.6 814,153.4 826,151.2 838,149.0 850,146.8 862,144.5 874,142.3 886,140.0 898,137.7 910,135.4 922,133.1 934,130.8 946,128.4 958,126.1 970,123.8 982,121.4 994,119.1 1006,116.7 1018,114.4 1030,112.0 1042,109.6 1054,107.3 1066,104.9 1078,102.5 1090,100.1 1102,97.7 1114,95.3 1126,92.8 1138,90.4 1150,88.0 1162,85.6 1174,83.2 1186,80.8 1198,78.4 1210,75.9 1222,73.5" stroke-width="1"/>
<polyline points="34,342.0 46,341.1 58,340.2 70,339.3 82,338.3 94,337.3 106,336.2 118,335.1 130,334.0 142,332.8 154,331.6 166,330.4 178,329.1 190,327.8 202,326.4 214,325.0 226,323.5 238,322.0 250,320.5 262,318.9 274,317.4 286,315.8 298,314.1 310,312.5 322,310.8 334,309.1 346,307.4 358,305.7 370,304.0 382,302.3 394,300.5 406,298.8 418,297.0 430,295.3 442,293.5 454,291.7 466,289.9 478,288.1 490,286.2 502,284.4 514,282.5 526,280.6 538,278.7 550,276.8 562,274.9 574,273.0 586,271.1 598,269.1 610,267.1 622,265.2 634,263.2 646,261.2 658,259.2 670,257.1 682,255.1 694,253.0 706,250.9 718,248.8 730,246.7 742,244.6 754,242.5 766,240.4 778,238.2 790,236.0 802,233.9 814,231.7 826,229.5 838,227.3 850,225.0 862,222.8 874,220.5 886,218.2 898,216.0 910,213.7 922,211.3 934,209.0 946,206.7 958,204.4 970,202.0 982,199.7 994,197.3 1006,195.0 1018,192.6 1030,190.3 1042,187.9 1054,185.5 1066,183.1 1078,180.7 1090,178.3 1102,175.9 1114,173.5 1126,171.1 1138,168.7 1150,166.2 1162,163.8 1174,161.4 1186,159.0 1198,156.6 1210,154.2 1222,151.8" stroke-width="2"/>
<polyline points="34,421.2 46,420.4 58,419.5 70,418.5 82,417.5 94,416.5 106,415.5 118,414.4 130,413.3 142,412.1 154,410.9 166,409.6 178,408.4 190,407.0 202,405.6 214,404.2 226,402.7 238,401.3 250,399.7 262,398.2 274,396.6 286,395.0 298,393.4 310,391.7 322,390.1 334,388.4 346,386.7 358,385.0 370,383.3 382,381.5 394,379.8 406,378.0 418,376.3 430,374.5 442,372.7 454,370.9 466,369.1 478,367.3 490,365.5 502,363.6 514,361.8 526,359.9 538,358.0 550,356.1 562,354.2 574,352.3 586,350.3 598,348.4 610,346.4 622,344.4 634,342.4 646,340.4 658,338.4 670,336.4 682,334.3 694,332.3 706,330.2 718,328.1 730,326.0 742,323.9 754,321.7 766,319.6 778,317.5 790,315.3 802,313.1 814,310.9 826,308.7 838,306.5 850,304.3 862,302.0 874,299.8 886,297.5 898,295.2 910,292.9 922,290.6 934,288.3 946,285.9 958,283.6 970,281.3 982,278.9 994,276.6 1006,274.2 1018,271.9 1030,269.5 1042,267.1 1054,264.8 1066,262.4 1078,260.0 1090,257.6 1102,255.2 1114,252.8 1126,250.3 1138,247.9 1150,245.5 1162,243.1 1174,240.7 1186,238.3 1198,235.9 1210,233.4 1222,231.0" stroke-width="1"/>
<polyline points="34,500.0 46,499.1 58,498.2 70,497.3 82,496.3 94,495.3 106,494.2 118,493.1 130,492.0 142,490.8 154,489.6 166,488.4 178,487.1 190,485.8 202,484.4 214,483.0 226,481.5 238,480.0 250,478.5 262,476.9 274,475.4 286,473.8 298,472.1 310,470.5 322,468.8 334,467.1 346,465.4 358,463.7 370,462.0 382,460.3 394,458.5 406,456.8 418,455.0 430,453.3 442,451.5 454,449.7 466,447.9 478,446.1 490,444.2 502,442.4 514,440.5 526,438.6 538,436.7 550,434.8 562,432.9 574,431.0 586,429.1 598,427.1 610,425.1 622,423.2 634,421.2 646,419.2 658,417.2 670,415.1 682,413.1 694,411.0 706,408.9 718,406.8 730,404.7 742,402.6 754,400.5 766,398.4 778,396.2 790,394.0 802,391.9 814,389.7 826,387.5 838,385.3 850,383.0 862,380.8 874,378.5 886,376.2 898,374.0 910,371.7 922,369.3 934,367.0 946,364.7 958,362.4 970,360.0 982,357.7 994,355.3 1006,353.0 1018,350.6 1030,348.3 1042,345.9 1054,343.5 1066,341.1 1078,338.7 1090,336.3 1102,333.9 1114,331.5 1126,329.1 1138,326.7 1150,324.2 1162,321.8 1174,319.4 1186,317.0 1198,314.6 1210,312.2 1222,309.8" stroke-width="1"/>
<polyline points="34,578.8 46,577.9 58,577.0 70,576.0 82,575.0 94,574.0 106,573.0 118,571.9 130,570.8 142,569.6 154,568.4 166,567.1 178,565.9 190,564.5 202,563.1 214,561.7 226,560.2 238,558.8 250,557.2 262,555.7 274,554.1 286,552.5 298,550.9 310,549.2 322,547.6 334,545.9 346,544.2 358,542.5 370,540.8 382,539.0 394,537.3 406,535.5 418,533.8 430,532.0 442,530.2 454,528.4 466,526.6 478,524.8 490,523.0 502,521.1 514,519.3 526,517.4 538,515.5 550,513.6 562,511.7 574,509.8 586,507.8 598,505.9 610,503.9 622,501.9 634,499.9 646,497.9 658,495.9 670,493.9 682,491.8 694,489.8 706,487.7 718,485.6 730,483.5 742,481.4 754,479.2 766,477.1 778,475.0 790,472.8 802,470.6 814,468.4 826,466.2 838,464.0 850,461.8 862,459.5 874,457.3 886,455.0 898,452.7 910,450.4 922,448.1 934,445.8 946,443.4 958,441.1 970,438.8 982,436.4 994,434.1 1006,431.7 1018,429.4 1030,427.0 1042,424.6 1054,422.3 1066,419.9 1078,417.5 1090,415.1 1102,412.7 1114,410.3 1126,407.8 1138,405.4 1150,403.0 1162,400.6 1174,398.2 1186,395.8 1198,393.4 1210,390.9 1222,388.5" stroke-width="1"/>
<polyline points="34,657.0 46,656.1 58,655.2 70,654.3 82,653.3 94,652.3 106,651.2 118,650.1 130,649.0 142,647.8 154,646.6 166,645.4 178,644.1 190,642.8 202,641.4 214,640.0 226,638.5 238,637.0 250,635.5 262,633.9 274,632.4 286,630.8 298,629.1 310,627.5 322,625.8 334,624.1 346,622.4 358,620.7 370,619.0 382,617.3 394,615.5 406,613.8 418,612.0 430,610.3 442,608.5 454,606.7 466,604.9 478,603.1 490,601.2 502,599.4 514,597.5 526,595.6 538,593.7 550,591.8 562,589.9 574,588.0 586,586.1 598,584.1 610,582.1 622,580.2 634,578.2 646,576.2 658,574.2 670,572.1 682,570.1 694,568.0 706,565.9 718,563.8 730,561.7 742,559.6 754,557.5 766,555.4 778,553.2 790,551.0 802,548.9 814,546.7 826,544.5 838,542.3 850,540.0 862,537.8 874,535.5 886,533.2 898,531.0 910,528.7 922,526.3 934,524.0 946,521.7 958,519.4 970,517.0 982,514.7 994,512.3 1006,510.0 1018,507.6 1030,505.3 1042,502.9 1054,500.5 1066,498.1 1078,495.7 1090,493.3 1102,490.9 1114,488.5 1126,486.1 1138,483.7 1150,481.2 1162,478.8 1174,476.4 1186,474.0 1198,471.6 1210,469.2 1222,466.8" stroke-width="2"/>
<polyline points="34,736.2 46,735.4 58,734.5 70,733.5 82,732.5 94,731.5 106,730.5 118,729.4 130,728.3 142,727.1 154,725.9 166,724.6 178,723.4 190,722.0 202,720.6 214,719.2 226,717.7 238,716.3 250,714.7 262,713.2 274,711.6 286,710.0 298,708.4 310,706.7 322,705.1 334,703.4 346,701.7 358,700.0 370,698.3 382,696.5 394,694.8 406,693.0 418,691.3 430,689.5 442,687.7 454,685.9 466,684.1 478,682.3 490,680.5 502,678.6 514,676.8 526,674.9 538,673.0 550,671.1 562,669.2 574,667.3 586,665.3 598,663.4 610,661.4 622,659.4 634,657.4 646,655.4 658,653.4 670,651.4 682,649.3 694,647.3 706,645.2 718,643.1 730,641.0 742,638.9 754,636.7 766,634.6 778,632.5 790,630.3 802,628.1 814,625.9 826,623.7 838,621.5 850,619.3 862,617.0 874,614.8 886,612.5 898,610.2 910,607.9 922,605.6 934,603.3 946,600.9 958,598.6 970,596.3 982,593.9 994,591.6 1006,589.2 1018,586.9 1030,584.5 1042,582.1 1054,579.8 1066,577.4 1078,575.0 1090,572.6 1102,570.2 1114,567.8 1126,565.3 1138,562.9 1150,560.5 1162,558.1 1174,555.7 1186,553.3 1198,550.9 1210,548.5 1222,546.0" stroke-width="1"/>
<polyline points="34,815.0 46,814.1 58,813.2 70,812.3 82,811.3 94,810.3 106,809.2 118,808.1 130,807.0 142,805.8 154,804.6 166,803.4 178,802.1 190,800.8 202,799.4 214,798.0 226,796.5 238,795.0 250,793.5 262,791.9 274,790.4 286,788.8 298,787.1 310,785.5 322,783.8 334,782.1 346,780.4 358,778.7 370,777.0 382,775.3 394,773.5 406,771.8 418,770.0 430,768.3 442,766.5 454,764.7 466,762.9 478,761.1 490,759.2 502,757.4 514,755.5 526,753.6 538,751.7 550,749.8 562,747.9 574,746.0 586,744.1 598,742.1 610,740.1 622,738.2 634,736.2 646,734.2 658,732.2 670,730.1 682,728.1 694,726.0 706,723.9 718,721.8 730,719.7 742,717.6 754,715.5 766,713.4 778,711.2 790,709.0 802,706.9 814,704.7 826,702.5 838,700.3 850,698.0 862,695.8 874,693.5 886,691.2 898,689.0 910,686.7 922,684.3 934,682.0 946,679.7 958,677.4 970,675.0 982,672.7 994,670.3 1006,668.0 1018,665.6 1030,663.3 1042,660.9 1054,658.5 1066,656.1 1078,653.7 1090,651.3 1102,648.9 1114,646.5 1126,644.1 1138,641.7 1150,639.2 1162,636.8 1174,634.4 1186,632.0 1198,629.6 1210,627.2 1222,624.8" stroke-width="1"/>
<polyline points="34,893.8 46,892.9 58,892.0 70,891.0 82,890.0 94,889.0 106,888.0 118,886.9 130,885.8 142,884.6 154,883.4 166,882.1 178,880.9 190,879.5 202,878.1 214,876.7 226,875.2 238,873.8 250,872.2 262,870.7 274,869.1 286,867.5 298,865.9 310,864.2 322,862.6 334,860.9 346,859.2 358,857.5 370,855.8 382,854.0 394,852.3 406,850.5 418,848.8 430,847.0 442,845.2 454,843.4 466,841.6 478,839.8 490,838.0 502,836.1 514,834.3 526,832.4 538,830.5 550,828.6 562,826.7 574,824.8 586,822.8 598,820.9 610,818.9 622,816.9 634,814.9 646,812.9 658,810.9 670,808.9 682,806.8 694,804.8 706,802.7 718,800.6 730,798.5 742,796.4 754,794.2 766,792.1 778,790.0 790,787.8 802,785.6 814,783.4 826,781.2 838,779.0 850,776.8 862,774.5 874,772.3 886,770.0 898,767.7 910,765.4 922,763.1 934,760.8 946,758.4 958,756.1 970,753.8 982,751.4 994,749.1 1006,746.7 1018,744.4 1030,742.0 1042,739.6 1054,737.3 1066,734.9 1078,732.5 1090,730.1 1102,727.7 1114,725.3 1126,722.8 1138,720.4 1150,718.0 1162,715.6 1174,713.2 1186,710.8 1198,708.4 1210,706.0 1222,703.5" stroke-width="1"/>
</g>
<rect x="35" y="105" width="17" height="1" fill="#f00"/>
<rect x="1209" y="106" width="9" height="15" fill="#008000"/><rect x="1209" y="106" width="9" height="7" fill="#0f0"/>
<rect x="1210" y="114" width="6" height="6" fill="#000" stroke="#fff" stroke-width="1" transform="translate(0.5,0.5)"/><rect x="1212" y="116" width="3" height="2" fill="#fff"/>
<rect x="1209" y="411" width="9" height="13" fill="#008000"/><rect x="1210" y="412" width="7" height="11" fill="#fff"/>
<circle cx="1213.5" cy="417.5" r="2.9" fill="none" stroke="#000" stroke-width="1" shape-rendering="auto"/>
<rect x="1209" y="721" width="9" height="8" fill="#0f0"/>
<rect x="1118" y="727" width="4" height="6" fill="#ff0"/>
<path d="M1220 116.5h4M1220 203.5h4M1220 291.5h4M1220 378.5h4M1220 466.5h4M1220 553.5h4M1220 641.5h4M1220 729.5h4" stroke="#c0c0c0" stroke-width="1"/>
</svg><div class="ct" style="left:4.5px;top:5px;font-size:9.5px;letter-spacing:-0.2px">FIBONACCI/GALACTIC TRADER(TM).</div>
<div class="ct" style="left:14px;top:24px;font-size:11px;letter-spacing:-.175px;color:#f00">[005] Mars Price Line G 90 N -1</div>
<div class="ct" style="left:14px;top:34px;font-size:11px;letter-spacing:-.175px;color:#0f0">[006] Jupiter Price Line G 180 N -1</div>
<div class="a" style="left:1201px;top:8px;width:21px;height:638px;overflow:hidden">
<div class="ct" style="left:0;top:0">2900</div><div class="ct" style="left:0;top:87px">2800</div><div class="ct" style="left:0;top:175px">2700</div><div class="ct" style="left:0;top:262px">2600</div>
<div class="ct" style="left:0;top:350px">2500</div><div class="ct" style="left:0;top:437px">2400</div><div class="ct" style="left:0;top:525px">2300</div><div class="ct" style="left:0;top:612px">2200</div></div>
<div class="a" style="left:1191px;top:145px;width:31px;height:14px;background:#fff"><div class="ct" style="left:4px;top:2px;color:#000">2742</div></div>
<div class="ct" style="left:3px;top:631px;letter-spacing:-.1px">2010-03-29</div><div class="ct" style="left:67px;top:631px;letter-spacing:-.1px">2010-04-19</div><div class="ct" style="left:137px;top:631px;letter-spacing:-.1px">2010-05-10</div>
<div class="ct" style="left:212px;top:631px;letter-spacing:-.1px">2010-05-31</div><div class="ct" style="left:283px;top:631px;letter-spacing:-.1px">2010-06-21</div><div class="ct" style="left:357px;top:631px;letter-spacing:-.1px">2010-07-12</div>
<div class="ct" style="left:432px;top:631px;letter-spacing:-.1px">2010-08-02</div><div class="ct" style="left:506px;top:631px;letter-spacing:-.1px">2010-08-23</div><div class="ct" style="left:582px;top:631px;letter-spacing:-.1px">2010-09-13</div>
<div class="ct" style="left:656px;top:631px;letter-spacing:-.1px">2010-10-04</div><div class="ct" style="left:732px;top:631px;letter-spacing:-.1px">2010-10-25</div><div class="ct" style="left:797px;top:631px;letter-spacing:-.1px">2010-11-15</div>
<div class="ct" style="left:872px;top:631px;letter-spacing:-.1px">2010-12-06</div><div class="ct" style="left:941px;top:631px;letter-spacing:-.1px">2010-12-27</div><div class="ct" style="left:1012px;top:631px;letter-spacing:-.1px">2011-01-17</div>
<div class="ct" style="left:1087px;top:631px;letter-spacing:-.1px">2011-02-07</div><div class="ct" style="left:1163px;top:631px;letter-spacing:-.1px">2011-</div>
<div class="a" style="left:1205px;top:630px;width:15px;height:14px;background:#c0c0c0;border:1px solid;border-color:#fff #606060 #606060 #fff"><div class="ct" style="left:.5px;top:.5px;color:#000;font-size:11px;letter-spacing:-0.6px">TF</div></div>
</div><svg class="a" style="left:0;top:160px" width="29" height="392" viewBox="0 160 29 392" font-family="Liberation Sans" shape-rendering="crispEdges">
<rect x="0" y="164" width="29" height="384" fill="#f0f0f0"/>
<path d="M1.5 164V548M1 164.5H28M28.5 164V548" stroke="#fff" fill="none"/><path d="M1 547.5H29" stroke="#d0d0d0"/>
<path d="M4 170.5H26M26.5 168V171" stroke="#a0a0a0" fill="none"/><path d="M4 171.5H26" stroke="#fff"/>
<path d="M4 249.5H24M4 303.5H24M4 405.5H24M4 483.5H24" stroke="#a0a0a0"/><path d="M4 250.5H24M4 304.5H24M4 406.5H24M4 484.5H24" stroke="#fff"/>
<g shape-rendering="auto">
<path d="M11 180v11l2.6-2.6l2 4.6l2-.9l-2-4.5h3.5z" fill="#000"/>
<path d="M15 202v18M6 211h18" stroke="#000" stroke-width="1.6"/>
</g>
<rect x="3" y="223" width="23" height="23" fill="#f8f8f8"/><path d="M3.5 246V223.5H26" stroke="#a0a0a0" fill="none"/><path d="M26.5 223V246.5H3" stroke="#fff" fill="none"/>
<rect x="8" y="229" width="14" height="14" fill="#e4e4e4"/>
<path d="M20 232.5h-5q-2.5 0-2.5 2.5v1q0 2.5 2.5 2.5h5" fill="none" stroke="#f00" stroke-width="3" shape-rendering="auto"/>
<path d="M18 231.5v2.5h2.5v-2.5zM18 237.5v2.5h2.5v-2.5z" fill="#fff" stroke="#000" stroke-width=".9" shape-rendering="auto"/>
<g shape-rendering="auto">
<circle cx="13.5" cy="262.5" r="4.5" fill="#d8f4f8" stroke="#000" stroke-width="1.3"/>
<path d="M7.5 262.5v10h8v-5" fill="#fff" stroke="#000" stroke-width="1.3"/><path d="M8.5 266h6v6h-6z" fill="#c0c0c0"/><path d="M11 261.5h5M11 263.5h5" stroke="#0cc"/>
<path d="M17 266l5 5" stroke="#000" stroke-width="2"/>
<circle cx="13.5" cy="287.5" r="4.5" fill="#a0a0a0" stroke="#a8a8a8" stroke-width="1.3"/>
<path d="M7.5 287.5v10h8v-5" fill="#e0e0e0" stroke="#a8a8a8" stroke-width="1.3"/><path d="M8.5 290h6v7h-6z" fill="#a0a0a0"/>
<path d="M17 291l5 5" stroke="#b0b0b0" stroke-width="2"/>
<path d="M8 312.5h14" stroke="#000" stroke-width="1.5"/><path d="M9.5 314.5l11 11" stroke="#000" stroke-width="4" stroke-linecap="round"/><path d="M10 315l10.5 10.5" stroke="#0e0" stroke-width="2"/><circle cx="9" cy="313.5" r="1" fill="#fff"/>
<path d="M8 336.5h16" stroke="#000" stroke-width="1.5"/><path d="M9.5 338.5l11 11" stroke="#000" stroke-width="4" stroke-linecap="round"/><path d="M10 339l10.5 10.5" stroke="#00e" stroke-width="2"/><circle cx="9" cy="337.5" r="1" fill="#fff"/>
<path d="M8 360v14.5" stroke="#000" stroke-width="2"/><path d="M10.5 361.5l10.5 10.5" stroke="#000" stroke-width="4" stroke-linecap="round"/><path d="M11 362l10 10" stroke="#00e" stroke-width="2"/><circle cx="10" cy="360.5" r="1" fill="#fff"/>
<path d="M6 395.5l13.5-13.5" stroke="#000" stroke-width="1.5"/><path d="M17.5 398.5v-9l1.5-3l1.5 3v9z" fill="#0ee" stroke="#000" stroke-width="1"/><path d="M19 383v5" stroke="#ee0" stroke-width="1"/>
<text x="6.5" y="424" font-size="13" font-family="Liberation Serif" fill="#000" textLength="17.5">abc</text>
<text x="6.5" y="448" font-size="13" font-family="Liberation Serif" fill="#000" textLength="17.5">abc</text>
<path d="M9 437l13 13M22 437l-13 13" stroke="#f00" stroke-width="1.400"/>
<text x="11" y="474.5" font-size="14.5" font-weight="bold" fill="#00f">F</text>
<circle cx="15" cy="498.5" r="7.3" fill="none" stroke="#000" stroke-width="1.5"/>
<ellipse cx="15" cy="523.5" rx="8.3" ry="5.6" fill="none" stroke="#000" stroke-width="1.5"/>
<path d="M7 538v6l-3.5-3z" fill="#000"/>
</g></svg>
<svg class="a" style="left:1251px;top:103px" width="29" height="460" viewBox="1251 103 29 460" font-family="Liberation Sans" shape-rendering="crispEdges">
<path d="M1252.5 104V559M1252 104.5H1279" stroke="#fff" fill="none"/><path d="M1279.5 104V560M1252 559.5H1280" stroke="#b0b0b0" fill="none"/>
<path d="M1255 108.5H1277M1277.5 106V109" stroke="#a0a0a0" fill="none"/><path d="M1255 109.5H1277" stroke="#fff"/>
<g shape-rendering="auto" fill="none">
<text x="1256.5" y="133" font-size="16" font-family="Liberation Serif" fill="#000" stroke="#000" stroke-width=".4">A</text><path d="M1262 119.5l13 7.5" stroke="#f00" stroke-width="1.6"/>
<path d="M1257.5 141.5l17.5 6.5" stroke="#f00" stroke-width="1.6"/><path d="M1257.5 141.5l17 16.5" stroke="#000" stroke-width="1.400"/><path d="M1257.5 141.5l9 16.5" stroke="#0e0" stroke-width="1.400"/>
<path d="M1258 169a8 8 0 0 0 16 0" stroke="#f0f" stroke-width="1.3"/><path d="M1261 169a5 5 0 0 0 10 0" stroke="#0e0" stroke-width="1.3"/><path d="M1257 172q8 12 17.5 0M1257 179.5l10.5-10.5" stroke="#000" stroke-width="1"/>
<text x="1258.5" y="203" font-size="13.5" font-weight="bold" fill="#000080" textLength="15.5" lengthAdjust="spacingAndGlyphs">DL</text>
<path d="M1257.5 219.5l7-6" stroke="#000" stroke-width="1.5"/><path d="M1258 229.5l17-16" stroke="#000" stroke-width="1.200"/><path d="M1258 220l10 10" stroke="#606060" stroke-width="1.3"/><path d="M1270 230.5l5-5" stroke="#000" stroke-width="1.200"/>
<text x="1256.5" y="250" font-size="15" font-family="Liberation Serif" fill="#000" stroke="#000" stroke-width=".3">I</text>
<path d="M1262 244l9.5 9" stroke="#000" stroke-width="1.400"/><path d="M1265 245.5h10" stroke="#f00" stroke-width="1.200"/><path d="M1268 249.5h7" stroke="#00f" stroke-width="1.200"/><path d="M1271 252.5h4" stroke="#080" stroke-width="1.200"/>
</g>
<path d="M1258 263.5h16M1258 266.5h16M1258 269.5h16M1258 276.5h16" stroke="#000"/>
<path d="M1258.5 287v14M1260.5 287v14M1263.5 287v14M1267.5 287v14M1272.5 287v14" stroke="#00f"/>
<path d="M1258.5 311v14M1263.5 311v14M1268.5 311v14M1273.5 311v14" stroke="#f00"/>
<path d="M1257.5 345v5M1258 347.5h2M1260.5 342v5M1261 344.5h2M1263.5 339v5M1264 341.5h2M1266.5 336v5M1264 338.5h2" stroke="#00f" fill="none"/>
<rect x="1268.5" y="333.5" width="6" height="3" fill="#fff" stroke="#f00"/><rect x="1272.5" y="339.5" width="2" height="3" fill="#fff" stroke="#f00"/><path d="M1270 335h1M1272 335h1" stroke="#000"/>
<g shape-rendering="auto" fill="none">
<path d="M1261 363.5l7-6.5M1260 372.5l14-13.5M1269 372.5l6-6" stroke="#000" stroke-width="1.200"/>
<path d="M1259 396l9-13" stroke="#00f" stroke-width="1.200"/><path d="M1259.5 396.5h9M1268.5 396v-12" stroke="#a00" stroke-dasharray="1 1"/><path d="M1268.5 396l5.5-11" stroke="#000" stroke-width="1.200"/>
</g>
<path d="M1257 407.5h18M1257 415.5h18" stroke="#00f"/><path d="M1257 411.5h18M1257 419.5h18" stroke="#f00"/>
<text x="1260.5" y="420" font-size="15" font-weight="bold" fill="#008000" shape-rendering="auto">G</text>
<g shape-rendering="auto" fill="none" stroke="#000" stroke-width="1.100"><path d="M1259.5 444l6.5-13M1259.5 444l10.5-13M1259.5 444l14.5-12M1259.5 444l14.5-7M1259.5 444l14.5-3"/><path d="M1259 445l3-4l1 3z" fill="#000"/></g>
<g shape-rendering="auto" font-family="Liberation Mono" font-size="15">
<text x="1257" y="467" fill="#800080">G</text><text x="1266" y="467" fill="#008000">9</text>
<text x="1257" y="491" fill="#800080">G</text><text x="1266" y="491" fill="#800080">S</text></g>
<g shape-rendering="auto" font-weight="bold" font-size="13.5" fill="#000"><text x="1258" y="515" textLength="16" lengthAdjust="spacingAndGlyphs">LS</text><text x="1260" y="539">Bi</text></g>
<path d="M1257 549v6l-3.5-3z" fill="#000" shape-rendering="auto"/>
</svg>
<div id="status" class="a"></div>
<div id="taskbar" class="a"></div>
<div class="tb" style="left:430px;width:157px"><svg class="a tbi" style="left:6px;top:3px" width="18" height="18" viewBox="0 0 18 18"><circle cx="9" cy="9" r="8" fill="#e8721a"/><circle cx="10.5" cy="7.5" r="4.6" fill="#2a5ab8"/><path d="M1.5 7q1-5 5-6l-.5 2.5q3-.5 4 1.5q-3 0-3.5 2.5q2 .5 2.5 2q-2 1.5-4 .5q1 4 5 4.5q-6 2.5-8.5-3z" fill="#f09020"/></svg><span style="left:27px;transform:scaleX(.917)">sęs czy sens - Szukaj...</span></div>
<div class="tb" style="left:590px;width:157px"><svg class="a tbi" style="left:6px;top:4px" width="18" height="18" viewBox="0 0 18 18"><rect x="1" y="0" width="16" height="16" fill="#000"/><ellipse cx="9" cy="8.5" rx="5.5" ry="4" fill="#7aa0cc"/><path d="M3 10l2-2l2 1l3-3l1.5 1" stroke="#dde" stroke-width="1.3" fill="none"/><path d="M1.5 12.5l15.5-9" stroke="#11f" stroke-width="1"/></svg><span style="left:30.3px;transform:scaleX(.989)">Notowania 3</span></div>
<div class="tb act" style="left:750px;width:157px"><svg class="a tbi" style="left:7px;top:4px" width="18" height="18" viewBox="0 0 18 18"><rect x="1" y="1" width="9" height="8" fill="#fff"/><path d="M1 3.5h3l-3 3h4M6 2v6M5 4.5h4" stroke="#22f" stroke-width="1.6" fill="none"/><rect x="13" y="2" width="2" height="3" fill="#0ee"/><rect x="2" y="13" width="3" height="2" fill="#f0f"/><rect x="8" y="15" width="2" height="2" fill="#0c0"/><rect x="14" y="12" width="1.5" height="1.5" fill="#ddd"/></svg><span style="left:28.2px;transform:scaleX(.982)">Fibonacci/Galactic ...</span></div>
<svg class="a" style="left:0;top:747px" width="1280" height="53" viewBox="0 747 1280 53" font-family="Liberation Sans">
<g shape-rendering="crispEdges">
<path d="M29 748.5H1250M30.5 747V769" stroke="#fff" fill="none"/><path d="M29.5 747V769M1250.5 747V769" stroke="#a0a0a0" fill="none"/>
<path d="M34 750.5H190M34.5 750V767M1019 750.5H1250M1019.5 750V767" stroke="#808080" fill="none"/><path d="M35 751.5H189M35.5 751V766M1020 751.5H1250M1020.5 751V766" stroke="#696969" fill="none"/>
<path d="M0 768.5H1280" stroke="#fff"/><path d="M35 766.5H191M190.5 750V767M1020 766.5H1250" stroke="#fff" fill="none"/>
</g>
<!-- orb -->
<defs>
<radialGradient id="og" cx="50%" cy="85%" r="80%"><stop offset="0" stop-color="#2ec4f4"/><stop offset=".35" stop-color="#0d6aa8"/><stop offset=".7" stop-color="#0b3f6e"/><stop offset="1" stop-color="#1b4468"/></radialGradient>
<linearGradient id="oh" x1="0" y1="0" x2="0" y2="1"><stop offset="0" stop-color="#c8dcec" stop-opacity=".85"/><stop offset="1" stop-color="#6f9cc0" stop-opacity=".35"/></linearGradient>
<linearGradient id="fr" x1="0" y1="0" x2="0" y2="1"><stop offset="0" stop-color="#e2451a"/><stop offset="1" stop-color="#f59a25"/></linearGradient>
<linearGradient id="fg" x1="0" y1="0" x2="0" y2="1"><stop offset="0" stop-color="#5d9e2f"/><stop offset="1" stop-color="#b5d66a"/></linearGradient>
<linearGradient id="fb" x1="0" y1="0" x2="1" y2="1"><stop offset="0" stop-color="#8fd0f5"/><stop offset="1" stop-color="#1a73c2"/></linearGradient>
<linearGradient id="fy" x1="0" y1="0" x2="0" y2="1"><stop offset="0" stop-color="#fde06a"/><stop offset="1" stop-color="#f7a81b"/></linearGradient>
</defs>
<circle cx="30" cy="785.5" r="20.5" fill="#0a0f14" opacity=".8"/>
<circle cx="30" cy="785.5" r="19.5" fill="url(#og)" stroke="#14324f" stroke-width="1.5"/>
<path d="M11.5 784a18.5 18.5 0 0 1 37 0q-18 -7 -37 0z" fill="url(#oh)"/>
<path d="M21.5 773.5q5-2.5 9.5 .5l-2 9q-4.5-2.5-10 0z" fill="url(#fr)"/>
<path d="M32.5 774.5q5 3 10.5 .5l-2.5 9.5q-5 2.5-10-.5z" fill="url(#fg)"/>
<path d="M18.5 784.5q5-2.5 10 0l-2.5 9q-4.5-2.5-10 0z" fill="url(#fb)"/>
<path d="M30 785.5q5 3 10 .5l-2.5 9.5q-5 2.5-10-.5z" fill="url(#fy)"/>
<!-- grippers -->
<g fill="#b4b8bc">
<path d="M64 775h1.4v1.4h-1.4zM67.5 775h1.4v1.4h-1.4zM71 775h1.4v1.4h-1.4zM64 779h1.4v1.4h-1.4zM67.5 779h1.4v1.4h-1.4zM71 779h1.4v1.4h-1.4zM64 783h1.4v1.4h-1.4zM67.5 783h1.4v1.4h-1.4zM71 783h1.4v1.4h-1.4zM64 787h1.3v1.3h-1.3zM67.5 787h1.3v1.3h-1.3zM71 787h1.3v1.3h-1.3zM64 791h1.3v1.3h-1.3zM67.5 791h1.3v1.3h-1.3zM71 791h1.3v1.3h-1.3zM64 795h1.3v1.3h-1.3zM67.5 795h1.3v1.3h-1.3zM71 795h1.3v1.3h-1.3z" opacity=".8"/><path d="M413 775h1.4v1.4h-1.4zM416.5 775h1.4v1.4h-1.4zM420 775h1.4v1.4h-1.4zM413 779h1.4v1.4h-1.4zM416.5 779h1.4v1.4h-1.4zM420 779h1.4v1.4h-1.4zM413 783h1.4v1.4h-1.4zM416.5 783h1.4v1.4h-1.4zM420 783h1.4v1.4h-1.4zM413 787h1.3v1.3h-1.3zM416.5 787h1.3v1.3h-1.3zM420 787h1.3v1.3h-1.3zM413 791h1.3v1.3h-1.3zM416.5 791h1.3v1.3h-1.3zM420 791h1.3v1.3h-1.3zM413 795h1.3v1.3h-1.3zM416.5 795h1.3v1.3h-1.3zM420 795h1.3v1.3h-1.3z" opacity=".8"/><path d="M1054 775h1.4v1.4h-1.4zM1057.5 775h1.4v1.4h-1.4zM1061 775h1.4v1.4h-1.4zM1054 779h1.4v1.4h-1.4zM1057.5 779h1.4v1.4h-1.4zM1061 779h1.4v1.4h-1.4zM1054 783h1.4v1.4h-1.4zM1057.5 783h1.4v1.4h-1.4zM1061 783h1.4v1.4h-1.4zM1054 787h1.3v1.3h-1.3zM1057.5 787h1.3v1.3h-1.3zM1061 787h1.3v1.3h-1.3zM1054 791h1.3v1.3h-1.3zM1057.5 791h1.3v1.3h-1.3zM1061 791h1.3v1.3h-1.3zM1054 795h1.3v1.3h-1.3zM1057.5 795h1.3v1.3h-1.3zM1061 795h1.3v1.3h-1.3z" opacity=".8"/>
</g>
<!-- quick launch -->
<rect x="81.5" y="779.5" width="15" height="12" fill="#3f7fd8" stroke="#b9c7da" stroke-width="1.2"/><rect x="83" y="781" width="12" height="5" fill="#6ea5ee"/><rect x="83" y="789" width="12" height="1.5" fill="#222"/><circle cx="84.5" cy="789.5" r="1.5" fill="#e84"/>
<rect x="104.5" y="779.5" width="15" height="12" fill="#10308c" stroke="#b9c7da" stroke-width="1.2"/><rect x="106" y="781.5" width="6" height="4" fill="#e8eef8"/><rect x="108.5" y="784" width="6" height="4" fill="#e8eef8" stroke="#10308c" stroke-width=".5"/><rect x="111" y="786.5" width="6" height="4" fill="#e8eef8" stroke="#10308c" stroke-width=".5"/>
<rect x="129" y="778" width="11" height="5" fill="#f0a030"/><rect x="128.5" y="781.5" width="14" height="11" rx="1" fill="#e8f0fa" stroke="#8fb4dc"/><rect x="131.5" y="786" width="8" height="7" fill="#3b9a7a"/><rect x="133" y="789" width="5" height="4" fill="#4a90d8"/><rect x="139" y="782.5" width="2.5" height="2" fill="#e05020"/>
<path d="M153 778.5h13l-1 14h-13z" fill="#cfeaf4" stroke="#8fb0c0" stroke-width=".8"/><path d="M154 781h11M154 783.5h11M154 786h10.5M153.5 788.5h11" stroke="#8cc4d8" stroke-width=".8"/><path d="M153 778h13" stroke="#445" stroke-dasharray="1 1" stroke-width="1.5"/><path d="M165 792.5h-12" stroke="#b89860"/>
<path d="M180 777l1 2.5l2.5-.5l-1.5 2l6.5-1l-3 3.5l-3 2.5l-1 3l-3 3.5l.5-4l-3-2.5l-3.5-4l5.5 1.5l1-3z" fill="#00f"/>
<ellipse cx="205" cy="782.5" rx="4.5" ry="5" fill="#f4f4d0" stroke="#fff" stroke-width="1.300"/><path d="M203 779.5h3.5v3h-3.5zM203 784.5h4" stroke="#000" stroke-width="1.2" fill="none"/><rect x="203" y="785" width="4" height="2.5" fill="#e0d020"/><path d="M199 791.5h11l2-3" stroke="#999" stroke-width="1.300" fill="none"/><path d="M199 790.5h6" stroke="#00a" stroke-width="1"/>
<path d="M221 780.5h12.5l-1.5 12h-9.5z" fill="#6f8594" opacity=".85"/><path d="M220.5 780.5h13.5" stroke="#aebcc8" stroke-width="1.5"/><circle cx="227.2" cy="786.5" r="2.600" fill="none" stroke="#4a8be0" stroke-width="1.300"/>
<rect x="242.5" y="777.5" width="15" height="15" fill="#7ab8a8" stroke="#2a7be0" stroke-width="1.600"/><circle cx="250" cy="785" r="5.800" fill="#f0821a"/><path d="M248 781.5l5 3.5l-5 3.5z" fill="#fff"/>
<text x="266.5" y="792" font-size="19" font-weight="bold" fill="#2a8ae6" font-style="italic">e</text><path d="M266 791q-1-5 7-10q7-4 9-2" fill="none" stroke="#e8b030" stroke-width="1.600"/>
<path d="M289.5 778l7.5-.8v15.5l-7.5-.8z" fill="#f2dc8a"/><path d="M296 777.5h5.5v14.5h-5.5z" fill="#e6c868"/><path d="M297 777.2v15.5" stroke="#c8a848" stroke-width=".7"/><rect x="300.5" y="785" width="1.5" height="4" fill="#88b0d8"/>
<circle cx="319.5" cy="785" r="7.600" fill="#e8c020"/><path d="M319.5 785l-6.600-3.800a7.600 7.600 0 0 1 13.2 0z" fill="#dc3a2a"/><path d="M319.5 785l-6.600-3.800a7.600 7.600 0 0 0 6.600 11.400l3.300-5.700z" fill="#3a9a3a"/><path d="M312.900 781.2a7.600 7.600 0 0 1 13.2 0h-6.600z" fill="#dc3a2a"/><circle cx="319.5" cy="785" r="3.5" fill="#fff"/><circle cx="319.5" cy="785" r="2.700" fill="#3a7ad8"/>
<circle cx="342" cy="785" r="7.800" fill="#e8721a"/><circle cx="343.5" cy="783.5" r="4.5" fill="#2a5ab8"/><path d="M334.5 783q1-5 5-6l-.5 2.5q3-.5 4 1.5q-3 0-3.5 2.5q2 .5 2.5 2q-2 1.5-4 .5q1 4 5 4.5q-6 2.5-8.5-3z" fill="#f09020"/>
<path d="M364 778l10 4l-4 11l-10-4z" fill="#222"/><path d="M366 785.5l-4-4l5-1.5z" fill="#f00"/><path d="M366 785.5l1-5.5l4.5 2z" fill="#ff0"/><path d="M366 785.5l5.5-3.5l.5 5z" fill="#0c0"/><path d="M366 785.5l6 1.5l-3 4z" fill="#0cc"/><path d="M366 785.5l3 5.5l-5-1z" fill="#00f"/><path d="M366 785.5l-2 4.5l-2.5-5z" fill="#c0c"/>
<text x="380" y="787" font-size="12" font-weight="bold" font-family="Liberation Serif" fill="#e00" textLength="17">MS</text><path d="M382 786h13l-2 5h-10z" fill="#111"/><path d="M384 788h2M389 789h3" stroke="#0c8" stroke-width="1"/><path d="M394 779l3 9" stroke="#e00" stroke-width="1"/>
<!-- tray -->
<g fill="#fff" font-size="12.5"><text x="1073" y="787" textLength="12.5" lengthAdjust="spacingAndGlyphs" fill="#e8e8e8">PL</text><text x="1093.5" y="789" font-size="11" fill="#ccc">¡</text>
<text x="1240" y="789" textLength="27" lengthAdjust="spacingAndGlyphs">20:29</text></g>
<path d="M1109 780l-5 4l5 4" stroke="#f0f0f0" stroke-width="2" fill="none"/>
<rect x="1117" y="775" width="16" height="16" fill="#000"/><ellipse cx="1125" cy="783.5" rx="5.5" ry="4" fill="#7aa0cc"/><path d="M1119 785l2-2l2 1l3-3l1.5 1" stroke="#dde" stroke-width="1.300" fill="none"/><path d="M1117.5 787.5l15.5-9" stroke="#11f" stroke-width="1"/>
<path d="M1137 777q6-4 12 2q4 6-1 10q-5 3-9-2q-4-5-2-10z" fill="#a8acb0"/><path d="M1139.5 782.5l3 3l5-5.5" stroke="#fff" stroke-width="2" fill="none"/>
<rect x="1153.5" y="776.5" width="15" height="11" fill="#c0c0c0" stroke="#9aa" stroke-width="1"/><path d="M1153 776.5h16" stroke="#22228a" stroke-width="1.5"/><path d="M1154 790.5h6v-2.5M1162 790.5h6.5v-2.5" stroke="#22228a" stroke-width="1.5" fill="none"/>
<rect x="1189.5" y="776.5" width="6" height="13" rx="1" fill="#a8e0a0" stroke="#fff" stroke-width="1.2"/><rect x="1191" y="775" width="3" height="1.5" fill="#fff"/><path d="M1182.5 779.5h6v3q0 3-3 3t-3-3zM1185.5 785v5" fill="#fff" stroke="#fff" stroke-width="1"/><path d="M1184 776.5v3M1187 776.5v3" stroke="#e0c040" stroke-width="1.2"/>
<rect x="1206.5" y="776.5" width="8" height="7" fill="#2a6ad0" stroke="#dde" stroke-width="1.2"/><rect x="1200.5" y="780.5" width="8" height="7" fill="#2a6ad0" stroke="#dde" stroke-width="1.2"/><path d="M1202 790.5h5" stroke="#dde" stroke-width="1.5"/><circle cx="1211" cy="787" r="3.800" fill="#2a7ae0"/><path d="M1209 785q2-2 3.5 0q0 2-2 2.5q0 2 1 3q-3-1-2.5-5.5z" fill="#3c3"/>
<path d="M1218 780.5h3l4-4.5v14l-4-4.5h-3z" fill="#e8eef4" stroke="#fff" stroke-width=".6"/><path d="M1227 781q1.5 2 0 4M1229.5 779q3 4 0 8" stroke="#4c6" stroke-width="1.300" fill="none"/>
</svg>
</body></html>
